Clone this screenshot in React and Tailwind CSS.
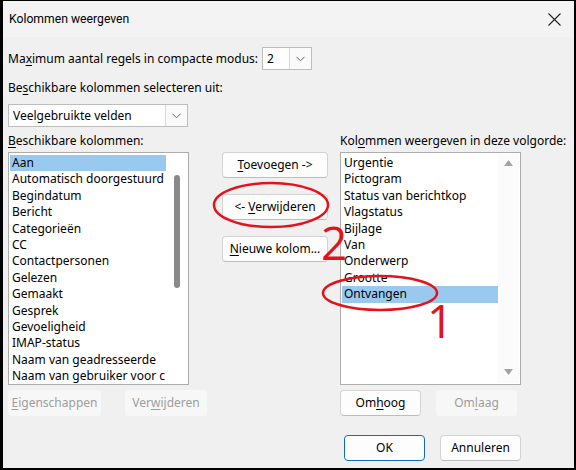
import { useState } from 'react'

const FONT = { fontFamily: '"Noto Sans", "Open Sans", Arial, sans-serif' }

const left = [
  'Aan', 'Automatisch doorgestuurd', 'Begindatum', 'Bericht', 'Categorieën', 'CC',
  'Contactpersonen', 'Gelezen', 'Gemaakt', 'Gesprek', 'Gevoeligheid', 'IMAP-status',
  'Naam van geadresseerde', 'Naam van gebruiker voor c',
]
const right = [
  'Urgentie', 'Pictogram', 'Status van berichtkop', 'Vlagstatus', 'Bijlage', 'Van',
  'Onderwerp', 'Grootte', 'Ontvangen',
]

// label with access key underlined
function Key({ pre = '', k, post = '' }) {
  return (
    <span className="whitespace-pre">
      {pre}<span className="underline underline-offset-2">{k}</span>{post}
    </span>
  )
}

function Chevron() {
  return (
    <svg width="9" height="6" viewBox="0 0 9 6" fill="none">
      <path d="M0.5 0.8 L4.5 4.8 L8.5 0.8" stroke="#606060" strokeWidth="1" />
    </svg>
  )
}

function Combo({ value, w, btn = 'w-[22px]' }) {
  return (
    <div className={`flex h-[23px] border border-[#bdbdbd] bg-white ${w}`}>
      <span className="flex-1 pl-[4px] leading-[21px]">{value}</span>
      <span className={`flex items-center justify-center border-l border-[#d9d9d9] bg-[#fafafa] ${btn}`}>
        <Chevron />
      </span>
    </div>
  )
}

function Btn({ children, w, primary, disabled }) {
  if (disabled) {
    return (
      <div className={`flex h-[26px] items-center justify-center rounded-[4px] bg-[#f7f7f7] text-[#9d9d9d] ${w}`}>
        {children}
      </div>
    )
  }
  return (
    <div
      className={`flex h-[26px] items-center justify-center rounded-[4px] bg-[#fdfdfd] ${w} ${
        primary ? 'border-[1.5px] border-[#0f6cbd]' : 'border border-[#d3d3d3] border-b-[#bdbdbd]'
      }`}
    >
      {children}
    </div>
  )
}

function List({ items, sel, scroll }) {
  return (
    <div className="flex h-[233px] w-[181px] border border-[#adadad] bg-white p-[1px]">
      <div className="flex-1 overflow-hidden pt-[1px]">
        {items.map((t) => (
          <div
            key={t}
            className={`h-[16.4px] whitespace-nowrap pl-[2px] leading-[16px] ${t === sel ? 'bg-[#99c9ef]' : ''}`}
          >
            {t}
          </div>
        ))}
      </div>
      {scroll === 'thumb' ? (
        <div className="flex w-[21px] justify-center pt-[21px]">
          <div className="h-[113px] w-[6px] rounded-[3px] bg-[#8a8a8a]" />
        </div>
      ) : (
        <div className="flex w-[21px] flex-col items-center justify-between bg-[#fbfbfb] pb-[8px] pt-[6px]">
          <svg width="9" height="6" viewBox="0 0 9 6"><path d="M4.5 0 L9 6 L0 6 Z" fill="#a3a3a3" /></svg>
          <svg width="9" height="6" viewBox="0 0 9 6"><path d="M0 0 L9 0 L4.5 6 Z" fill="#a3a3a3" /></svg>
        </div>
      )}
    </div>
  )
}

export default function App() {
  const [sel] = useState('Ontvangen')
  return (
    <div className="h-[470px] w-[576px] bg-black pb-[2px] pl-[3px] pr-[2px] pt-[1px]" style={FONT}>
      <div className="relative h-full w-full bg-[#f0f0f0] text-[12px] text-black">
        {/* title bar */}
        <div className="flex h-[36px] items-center justify-between bg-[#f3f3f3] pl-[6px] pr-[13px]">
          <span className="text-[12.2px]" style={{ fontFamily: 'Roboto, "Noto Sans", sans-serif' }}>Kolommen weergeven</span>
          <svg width="13" height="13" viewBox="0 0 13 13">
            <path d="M0.5 0.5 L12.5 12.5 M12.5 0.5 L0.5 12.5" stroke="#222" strokeWidth="1.1" />
          </svg>
        </div>

        <div className="px-[5px]">
          <div className="mt-[10px] flex items-center gap-[4px]">
            <Key pre="Ma" k="x" post="imum aantal regels in compacte modus:" />
            <Combo value="2" w="w-[50px]" />
          </div>

          <div className="mt-[8px] h-[20px] leading-[20px]">
            <Key pre="Be" k="s" post="chikbare kolommen selecteren uit:" />
          </div>

          <div className="mt-[6px]">
            <Combo value="Veelgebruikte velden" w="w-[180px]" btn="w-[22px]" />
          </div>

          <div className="mt-[4px] flex h-[20px] leading-[20px]">
            <span className="w-[332px]"><Key k="B" post="eschikbare kolommen:" /></span>
            <Key pre="Kol" k="o" post="mmen weergeven in deze volgorde:" />
          </div>

          <div className="mt-[1px] flex">
            <List items={left} sel="Aan" scroll="thumb" />
            <div className="ml-[33px] flex flex-col gap-[16px]">
              <Btn w="w-[106px]"><Key k="T" post="oevoegen ->" /></Btn>
              <Btn w="w-[106px]"><Key pre="<- " k="V" post="erwijderen" /></Btn>
              <Btn w="w-[106px]"><Key k="N" post="ieuwe kolom..." /></Btn>
            </div>
            <div className="ml-[12px]">
              <List items={right} sel={sel} scroll="arrows" />
            </div>
          </div>

          <div className="mt-[5px] flex">
            <Btn w="w-[93px]" disabled><Key k="E" post="igenschappen" /></Btn>
            <div className="ml-[24px]">
              <Btn w="w-[82px]" disabled><Key pre="Ver" k="w" post="ijderen" /></Btn>
            </div>
            <div className="ml-[133px] flex gap-[15px]">
              <Btn w="w-[81px]"><Key pre="Om" k="h" post="oog" /></Btn>
              <Btn w="w-[81px]" disabled><Key pre="Om" k="l" post="aag" /></Btn>
            </div>
          </div>

          <div className="mt-[19px] flex justify-end gap-[15px] pr-[48px]">
            <Btn w="w-[81px]" primary>OK</Btn>
            <Btn w="w-[81px]">Annuleren</Btn>
          </div>
        </div>

        {/* red annotations */}
        <svg className="pointer-events-none absolute left-0 top-0" width="571" height="467" viewBox="0 0 571 467">
          <ellipse cx="268" cy="204" rx="57" ry="22" fill="none" stroke="#e3131b" strokeWidth="2.5" />
          <ellipse cx="377" cy="292" rx="57" ry="17" fill="none" stroke="#e3131b" strokeWidth="2.5" />
        </svg>
        <span className="pointer-events-none absolute left-[318px] top-[218px] text-[46px] leading-none text-[#e3131b]" style={{ fontFamily: '"Open Sans", sans-serif' }}>2</span>
        <span className="pointer-events-none absolute left-[424px] top-[296px] text-[46px] leading-none text-[#e3131b]" style={{ fontFamily: '"Open Sans", sans-serif' }}>1</span>
      </div>
    </div>
  )
}
